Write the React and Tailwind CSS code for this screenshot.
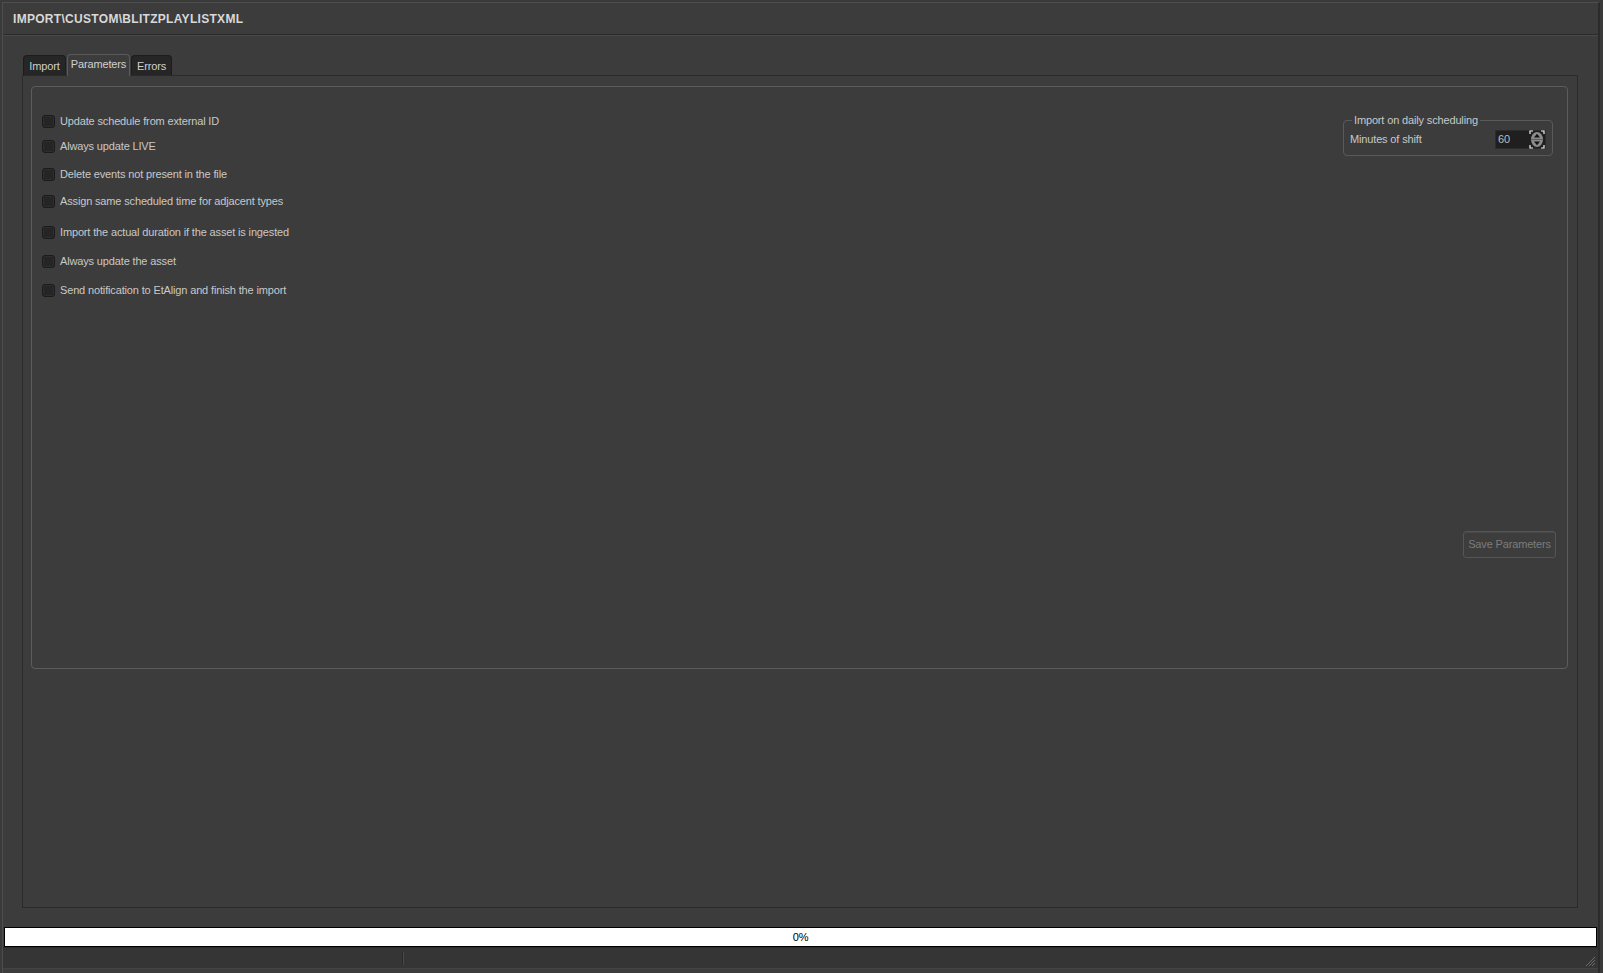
import React from "react";

const options = [
  { label: "Update schedule from external ID", mt: "mt-0" },
  { label: "Always update LIVE", mt: "mt-[11px]" },
  { label: "Delete events not present in the file", mt: "mt-[14px]" },
  { label: "Assign same scheduled time for adjacent types", mt: "mt-[13px]" },
  { label: "Import the actual duration if the asset is ingested", mt: "mt-[17px]" },
  { label: "Always update the asset", mt: "mt-[15px]" },
  { label: "Send notification to EtAlign and finish the import", mt: "mt-[15px]" },
];

const tabs = [
  { label: "Import", active: false, w: "w-[43px]" },
  { label: "Parameters", active: true, w: "w-[63px]" },
  { label: "Errors", active: false, w: "w-[41px]" },
];

const SpinButtons = () => (
  <svg width="16" height="19" viewBox="0 0 16 19">
    {/* corner brackets */}
    <path d="M1 4V1H4 M12 1H15V4 M1 15V18H4 M12 18H15V15" stroke="#f0f0f0" strokeWidth="1.2" fill="none" />
    <ellipse cx="8" cy="9.5" rx="6" ry="7.5" fill="#8c8c8c" />
    <path d="M2.5 9.5H13.5" stroke="#5a5a5a" strokeWidth="1" />
    <path d="M5 7.5L8 3.8L11 7.5Z" fill="#111" />
    <path d="M5 11.5L8 15.2L11 11.5Z" fill="#111" />
  </svg>
);

const SizeGrip = () => (
  <svg width="12" height="12" viewBox="0 0 12 12">
    <path d="M11 2L2 11 M11 5L5 11 M11 8L8 11" stroke="#6a6a6a" strokeWidth="1" />
  </svg>
);

export default function App() {
  return (
    <div className="w-[1603px] h-[973px] bg-[#3a3a3a] pt-[2px] pl-[2px] pr-[3px] font-['Liberation_Sans',Arial,sans-serif] text-[11px] tracking-[-0.15px] text-[#c8c8c8] overflow-hidden">
      <div className="h-full flex flex-col border-t border-l border-[#4e4e4e] border-r-2 border-r-[#2b2b2b] bg-[#3c3c3c]">
        {/* title bar */}
        <div className="h-[32px] shrink-0 flex items-center pl-[10px] border-b border-[#2a2a2a] shadow-[0_1px_0_#4a4a4a]">
          <span className="font-bold text-[12px] tracking-[0.3px] text-[#d8d8d8]">IMPORT\CUSTOM\BLITZPLAYLISTXML</span>
        </div>

        {/* tab widget */}
        <div className="flex-1 flex flex-col pl-[19px] pr-[20px] pt-[19px] pb-[19px]">
          <div className="flex items-end h-[21px] pl-[1px] gap-[1px]">
            {tabs.map((t) =>
              t.active ? (
                <div
                  key={t.label}
                  className={`${t.w} h-[22px] -mb-px z-10 flex items-start pt-[1px] justify-center rounded-t-[4px] border border-b-0 border-[#5a5a5a] bg-[#3c3c3c] text-[#d0d0d0]`}
                >
                  {t.label}
                </div>
              ) : (
                <div
                  key={t.label}
                  className={`${t.w} h-[20px] flex items-start pt-[2px] justify-center rounded-t-[4px] border border-b-0 border-[#1c1c1c] bg-[#262626] text-[#cfcfcf]`}
                >
                  {t.label}
                </div>
              )
            )}
          </div>

          <div className="flex-1 border border-[#2a2a2a] pl-[8px] pr-[9px] pt-[10px]">
            <div className="h-[583px] rounded-[4px] border border-[#5c5c5c] flex justify-between">
              {/* checkbox list */}
              <div className="flex flex-col pt-[27px] pl-[10px]">
                {options.map((o) => (
                  <label key={o.label} className={`${o.mt} h-[14px] flex items-center gap-[5px]`}>
                    <span className="w-[13px] h-[13px] rounded-[3px] bg-[#252525] border border-[#1b1b1b] shadow-[inset_0_0_0_1px_#2e2e2e]" />
                    <span>{o.label}</span>
                  </label>
                ))}
              </div>

              {/* right side */}
              <div className="flex flex-col items-end pr-[10px] pt-[33px]">
                <div className="mr-[4px] w-[210px] h-[36px] rounded-[4px] border border-[#5a5a5a] relative flex items-center justify-between pl-[6px] pr-[6px] pt-[2px]">
                  <span className="absolute -top-[8px] left-[8px] px-[2px] bg-[#3c3c3c] leading-[14px]">Import on daily scheduling</span>
                  <span>Minutes of shift</span>
                  <div className="w-[51px] h-[19px] bg-[#1f1f1f] border border-[#2c2c2c] flex items-center justify-between pl-[2px]">
                    <span className="text-[#bdbdbd]">60</span>
                    <SpinButtons />
                  </div>
                </div>
                <button
                  disabled
                  className="mt-[375px] mr-[1px] w-[93px] h-[27px] rounded-[3px] border border-[#555] bg-[#3d3d3d] text-[#7c7c7c] text-[11px] shadow-[inset_0_1px_0_#484848]"
                >
                  Save Parameters
                </button>
              </div>
            </div>
          </div>
        </div>

        {/* progress bar */}
        <div className="shrink-0 h-[20px] mx-[1px] bg-white border border-black flex items-center justify-center text-black text-[11px]">
          0%
        </div>

        {/* status bar */}
        <div className="shrink-0 h-[21px] bg-[#353535] border-t border-[#2a2a2a] flex items-center">
          <div className="w-[399px] h-full" />
          <div className="h-[13px] w-[2px] border-l border-[#2a2a2a] bg-[#4a4a4a]" />
          <div className="flex-1" />
          <div className="pr-[2px] pt-[6px]">
            <SizeGrip />
          </div>
        </div>
        <div className="shrink-0 h-[5px] bg-[#3c3c3c] border-t border-[#444]" />
      </div>
    </div>
  );
}
